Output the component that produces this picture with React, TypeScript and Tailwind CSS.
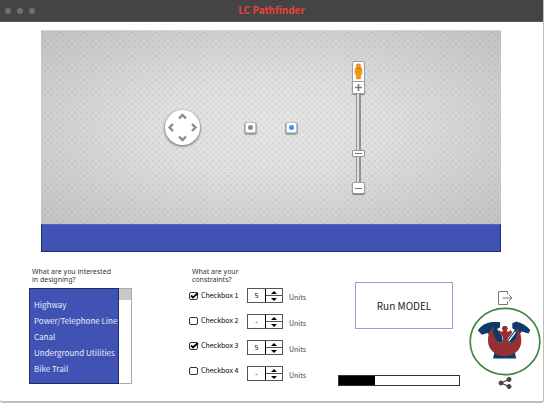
import { useState } from "react";

const routes = ["Highway", "Power/Telephone Line", "Canal", "Underground Utilities", "Bike Trail"];

const constraints = [
  { name: "Checkbox 1", checked: true, value: "5" },
  { name: "Checkbox 2", checked: false, value: "-" },
  { name: "Checkbox 3", checked: true, value: "5" },
  { name: "Checkbox 4", checked: false, value: "-" },
];

function TitleBar() {
  return (
    <header className="relative flex h-[22px] items-center justify-center border-b border-[#5a5a5a] bg-[#444]">
      <div className="absolute left-[5px] flex gap-[6px]">
        <span className="size-[6px] rounded-full bg-[#6e6e6e]" />
        <span className="size-[6px] rounded-full bg-[#6e6e6e]" />
        <span className="size-[6px] rounded-full bg-[#6e6e6e]" />
      </div>
      <h1 className="pb-[2px] text-[10px] leading-[18px] font-bold text-[#ec4237]">LC Pathfinder</h1>
    </header>
  );
}

function PanControl() {
  return (
    <button aria-label="Pan" className="absolute top-[79px] left-[124px] size-[35px] rounded-full bg-white shadow-[0_1px_2px_1px_rgba(80,85,95,0.55)]">
      <svg viewBox="0 0 35 35" className="size-full" fill="none" stroke="#8b8b8b" strokeWidth="2.4">
        <path d="M14 8.500L17.500 5L21 8.500M14 26.500L17.500 30L21 26.500M8 14L4.500 17.500L8 21M27 14L30.500 17.500L27 21" />
      </svg>
    </button>
  );
}

function ZoomControl() {
  return (
    <div className="absolute top-[30px] left-[311px] flex w-[13px] flex-col items-center">
      <button aria-label="Street view" className="flex h-[21px] w-[13px] items-center justify-center rounded-t-[2px] border border-[#9a9fa6] bg-white">
        <svg viewBox="0 0 9 17" className="h-[17px] w-[9px]" fill="#f29a0c" stroke="#c47c10" strokeWidth=".4">
          <path d="M2 4.500H7L8 6V11H7L6.500 16H2.500L2 11H1V6Z" />
          <circle cx="4.500" cy="3" r="2.300" />
          <path d="M2.500 5.300H6.500" strokeWidth="1" />
        </svg>
      </button>
      <button aria-label="Zoom in" className="flex h-[12px] w-[13px] items-center justify-center rounded-b-[2px] border border-t-0 border-[#9a9fa6] bg-white shadow-[0_1px_1px_rgba(60,65,75,0.6)]">
        <svg viewBox="0 0 7 7" className="size-[7px]" stroke="#777" strokeWidth="1.5">
          <path d="M0 3.500H7M3.500 0V7" />
        </svg>
      </button>
      <div className="flex h-[88px] w-[13px] justify-center bg-[linear-gradient(90deg,transparent_4px,#8b9097_4px,#8b9097_5px,#dfe1e3_5px,#dfe1e3_7px,#8b9097_7px,#8b9097_9px,transparent_9px)]">
        <input
          type="range"
          aria-label="Zoom level"
          min={0}
          max={100}
          defaultValue={31}
          className="h-[88px] w-[13px] appearance-none bg-transparent [direction:rtl] [writing-mode:vertical-lr] [&::-webkit-slider-thumb]:h-[7px] [&::-webkit-slider-thumb]:w-[13px] [&::-webkit-slider-thumb]:appearance-none [&::-webkit-slider-thumb]:rounded-[1px] [&::-webkit-slider-thumb]:border [&::-webkit-slider-thumb]:border-[#8f949b] [&::-webkit-slider-thumb]:bg-[linear-gradient(#777,#777)] [&::-webkit-slider-thumb]:bg-[length:7px_1px] [&::-webkit-slider-thumb]:bg-center [&::-webkit-slider-thumb]:bg-no-repeat [&::-webkit-slider-thumb]:bg-white"
        />
      </div>
      <button aria-label="Zoom out" className="flex h-[12px] w-[13px] items-center justify-center rounded-[2px] border border-[#9a9fa6] bg-white shadow-[0_1px_1px_rgba(60,65,75,0.6)]">
        <span className="h-px w-[7px] bg-[#777]" />
      </button>
    </div>
  );
}

function MapPanel() {
  return (
    <section aria-label="Map" className="mt-[8px] mr-[42px] ml-[41px]">
      <div className="relative h-[194px] border-t border-[#d5d5d5] bg-[radial-gradient(circle_at_1px_1px,rgba(95,95,95,0.09)_1px,transparent_1px),radial-gradient(circle_at_4px_4px,rgba(95,95,95,0.09)_1px,transparent_1px),radial-gradient(ellipse_at_50%_50%,#e4e4e4_0%,#dfdfdf_35%,#c2c2c2_100%)] bg-[length:6px_6px,6px_6px,100%_100%]">
        <PanControl />
        <button aria-label="Centre map" className="absolute top-[91px] left-[204px] flex size-[11px] items-center justify-center rounded-[2px] border border-[#c0c3c6] bg-white shadow-[0_1px_1px_1px_rgba(90,95,105,0.5)]">
          <span className="size-[5px] rounded-full bg-[#8b8b8b]" />
        </button>
        <button aria-label="My location" className="absolute top-[91px] left-[245px] flex size-[11px] items-center justify-center rounded-[2px] border border-[#c0c3c6] bg-white shadow-[0_1px_1px_1px_rgba(90,95,105,0.5)]">
          <span className="size-[5px] rounded-full bg-[#4b8bf5]" />
        </button>
        <ZoomControl />
      </div>
      <div className="h-[28px] border border-[#222d6c] border-t-[#5563bd] bg-[#4152b5]" />
    </section>
  );
}

function RouteList() {
  return (
    <div>
      <label htmlFor="route" className="block pl-[3px] font-['Noto_Sans',sans-serif] text-[7px] leading-[8px] text-[#333]">
        What are you interested
        <br />
        in designing?
      </label>
      <div className="mt-[4px] flex h-[96px] w-[103px]">
        <select
          id="route"
          size={5}
          className="h-full w-[90px] appearance-none overflow-hidden border border-[#222d6c] bg-[#4152b5] bg-none pt-[10px] text-[8px] text-[#e8eaf8] outline-none"
        >
          {routes.map((route) => (
            <option key={route} className="h-[16px] min-h-0 py-0 pr-0 pl-[4px] leading-[16px]">
              {route}
            </option>
          ))}
        </select>
        <div className="flex-1 border border-l-0 border-[#aaa] bg-white">
          <div className="h-[11px] bg-[#c8c8c8]" />
        </div>
      </div>
    </div>
  );
}

function Tick({ name, initial }: { name: string; initial: boolean }) {
  const [on, setOn] = useState(initial);
  return (
    <label className="flex h-[15px] items-center gap-[3px] text-[7px] text-black">
      <span className="relative flex h-[8px] w-[9px]">
        <input
          type="checkbox"
          checked={on}
          onChange={() => setOn(!on)}
          className="h-[8px] w-[9px] appearance-none rounded-[2px] border border-[#333] bg-white"
        />
        {on && (
          <svg viewBox="0 0 10 8" className="pointer-events-none absolute top-0 left-0 h-[8px] w-[10px]" fill="none" stroke="#000" strokeWidth="1.8">
            <path d="M2 3.500L4 5.500L9 1" />
          </svg>
        )}
      </span>
      {name}
    </label>
  );
}

function Stepper({ name, value }: { name: string; value: string }) {
  return (
    <div className="flex h-[15px] items-center gap-[6px]">
      <div className="flex h-[15px] w-[36px] border border-[#555]">
        <input
          aria-label={name + " units"}
          defaultValue={value}
          className="w-[18px] border-r border-black bg-white p-0 text-center text-[7px] text-black outline-none"
        />
        <div className="flex flex-1 flex-col">
          <button aria-label={"Increase " + name} className="flex flex-1 items-center justify-center border-b border-[#555]">
            <svg viewBox="0 0 6 3" className="h-[3px] w-[6px]"><path d="M0 3L3 0L6 3Z" /></svg>
          </button>
          <button aria-label={"Decrease " + name} className="flex flex-1 items-center justify-center">
            <svg viewBox="0 0 6 3" className="h-[3px] w-[6px]"><path d="M0 0L3 3L6 0Z" /></svg>
          </button>
        </div>
      </div>
      <span className="pt-[3px] text-[7px] leading-[12px] text-[#444]">Units</span>
    </div>
  );
}

function Constraints() {
  return (
    <fieldset className="min-w-0">
      <legend className="pl-[3px] font-['Noto_Sans',sans-serif] text-[7px] leading-[8px] text-[#333]">
        What are your
        <br />
        constraints?
      </legend>
      <div className="mt-[4px] flex">
        <div className="flex w-[58px] flex-col gap-[10px]">
          {constraints.map((c) => (
            <Tick key={c.name} name={c.name} initial={c.checked} />
          ))}
        </div>
        <div className="flex flex-col gap-[11px]">
          {constraints.map((c) => (
            <Stepper key={c.name} name={c.name} value={c.value} />
          ))}
        </div>
      </div>
    </fieldset>
  );
}

function RunPanel() {
  return (
    <div className="flex flex-col pt-[14px] pr-[9px]">
      <button className="mr-[7px] ml-[17px] h-[47px] border border-[#929fd8] bg-white text-[10px] text-[#222]">Run MODEL</button>
      <div role="progressbar" aria-label="Model progress" aria-valuenow={30} className="mt-[46px] h-[11px] border border-[#333] bg-white">
        <div className="h-full w-[30%] bg-black" />
      </div>
    </div>
  );
}

function Actions() {
  return (
    <div className="flex w-[72px] flex-col items-center pt-[22px]">
      <button aria-label="Export">
        <svg viewBox="0 0 16 16" className="block size-[16px]" fill="none" stroke="#777" strokeWidth="1">
          <path d="M10.500 4.500V1.500H1.500V14.500H10.500V11.500M5.500 8H15M12 5L15 8L12 11" />
        </svg>
      </button>
      <svg viewBox="24 82 216 208" className="my-px block h-[69px] w-[72px]" role="img" aria-label="Pathfinder emblem">
        <ellipse cx="132" cy="186" rx="105" ry="100" fill="#fff" stroke="#3c8545" strokeWidth="5" />
        <g fill="#0c3a6b">
          <path d="M50 152Q66 130 92 127H117V144L108 148L122 168L126 190H98L86 168L80 160L62 166Z" />
          <path d="M154 131L166 126Q190 132 208 151L203 162L182 156L174 167L166 190H134L142 178L162 151L154 146Z" />
          <path d="M101 216H161L166 237H96Z" />
        </g>
        <path d="M143 185L164 157" stroke="#fff" strokeWidth="4" />
        <path fill="#963031" d="M101 139C84 150 80 167 81 188C83 213 106 230 131 230C158 230 179 213 181 188C182 168 177 151 164 143C170 154 171 167 164 177C157 188 146 194 140 188C138 180 142 173 148 168L154 158L149 151L144 156L138 156V151L141 146L136 139H127L122 146L125 151V156L119 156L114 151L110 157L118 163C127 171 128 184 122 189C117 193 108 187 103 178C95 165 94 151 101 139Z" />
      </svg>
      <button aria-label="Share">
        <svg viewBox="0 0 14 12" className="block h-[12px] w-[14px]" fill="#444" stroke="#444">
          <path d="M11 2.500L3 6L11 9.500" fill="none" strokeWidth="1.300" />
          <circle cx="11" cy="2.500" r="2" />
          <circle cx="3" cy="6" r="2" />
          <circle cx="11" cy="9.500" r="2" />
        </svg>
      </button>
    </div>
  );
}

export default function App() {
  return (
    <div className="bg-white pr-[2px] font-['Noto_Sans_CJK_SC','Noto_Sans',sans-serif]">
      <main className="overflow-hidden rounded-b-[3px] border-r border-b-2 border-[#bdbdbd] bg-white pb-[12px]">
        <TitleBar />
        <MapPanel />
        <div className="grid grid-cols-[160fr_149fr_131fr_74fr] pl-[29px]">
          <div className="pt-[16px]"><RouteList /></div>
          <div className="pt-[16px]"><Constraints /></div>
          <div className="pt-[16px]"><RunPanel /></div>
          <div className="pt-[16px]"><Actions /></div>
        </div>
      </main>
    </div>
  );
}
